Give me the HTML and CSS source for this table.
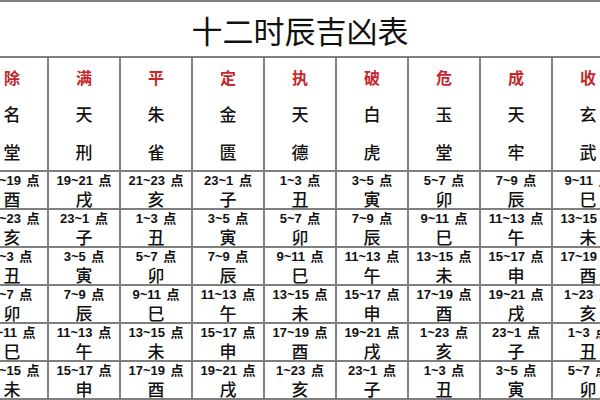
FILE: index.html
```html
<!DOCTYPE html>
<html lang="zh-CN">
<head>
<meta charset="utf-8">
<link rel="stylesheet" href="styles.css">
</head>
<body>
<div class="viewport">
  <div class="sheet">
    <div class="title">十二时辰吉凶表</div>

    <div class="head"><div class="h-red">除</div><div class="h-name">名</div><div class="h-name">堂</div></div>
    <div class="head"><div class="h-red">满</div><div class="h-name">天</div><div class="h-name">刑</div></div>
    <div class="head"><div class="h-red">平</div><div class="h-name">朱</div><div class="h-name">雀</div></div>
    <div class="head"><div class="h-red">定</div><div class="h-name">金</div><div class="h-name">匮</div></div>
    <div class="head"><div class="h-red">执</div><div class="h-name">天</div><div class="h-name">德</div></div>
    <div class="head"><div class="h-red">破</div><div class="h-name">白</div><div class="h-name">虎</div></div>
    <div class="head"><div class="h-red">危</div><div class="h-name">玉</div><div class="h-name">堂</div></div>
    <div class="head"><div class="h-red">成</div><div class="h-name">天</div><div class="h-name">牢</div></div>
    <div class="head"><div class="h-red">收</div><div class="h-name">玄</div><div class="h-name">武</div></div>

    <div class="cell"><div class="t">17~19 点</div><div class="b">酉</div></div>
    <div class="cell"><div class="t">19~21 点</div><div class="b">戌</div></div>
    <div class="cell"><div class="t">21~23 点</div><div class="b">亥</div></div>
    <div class="cell"><div class="t">23~1 点</div><div class="b">子</div></div>
    <div class="cell"><div class="t">1~3 点</div><div class="b">丑</div></div>
    <div class="cell"><div class="t">3~5 点</div><div class="b">寅</div></div>
    <div class="cell"><div class="t">5~7 点</div><div class="b">卯</div></div>
    <div class="cell"><div class="t">7~9 点</div><div class="b">辰</div></div>
    <div class="cell"><div class="t">9~11 点</div><div class="b">巳</div></div>

    <div class="cell"><div class="t">21~23 点</div><div class="b">亥</div></div>
    <div class="cell"><div class="t">23~1 点</div><div class="b">子</div></div>
    <div class="cell"><div class="t">1~3 点</div><div class="b">丑</div></div>
    <div class="cell"><div class="t">3~5 点</div><div class="b">寅</div></div>
    <div class="cell"><div class="t">5~7 点</div><div class="b">卯</div></div>
    <div class="cell"><div class="t">7~9 点</div><div class="b">辰</div></div>
    <div class="cell"><div class="t">9~11 点</div><div class="b">巳</div></div>
    <div class="cell"><div class="t">11~13 点</div><div class="b">午</div></div>
    <div class="cell"><div class="t">13~15 点</div><div class="b">未</div></div>

    <div class="cell"><div class="t">1~3 点</div><div class="b">丑</div></div>
    <div class="cell"><div class="t">3~5 点</div><div class="b">寅</div></div>
    <div class="cell"><div class="t">5~7 点</div><div class="b">卯</div></div>
    <div class="cell"><div class="t">7~9 点</div><div class="b">辰</div></div>
    <div class="cell"><div class="t">9~11 点</div><div class="b">巳</div></div>
    <div class="cell"><div class="t">11~13 点</div><div class="b">午</div></div>
    <div class="cell"><div class="t">13~15 点</div><div class="b">未</div></div>
    <div class="cell"><div class="t">15~17 点</div><div class="b">申</div></div>
    <div class="cell"><div class="t">17~19 点</div><div class="b">酉</div></div>

    <div class="cell"><div class="t">5~7 点</div><div class="b">卯</div></div>
    <div class="cell"><div class="t">7~9 点</div><div class="b">辰</div></div>
    <div class="cell"><div class="t">9~11 点</div><div class="b">巳</div></div>
    <div class="cell"><div class="t">11~13 点</div><div class="b">午</div></div>
    <div class="cell"><div class="t">13~15 点</div><div class="b">未</div></div>
    <div class="cell"><div class="t">15~17 点</div><div class="b">申</div></div>
    <div class="cell"><div class="t">17~19 点</div><div class="b">酉</div></div>
    <div class="cell"><div class="t">19~21 点</div><div class="b">戌</div></div>
    <div class="cell"><div class="t">1~23 点</div><div class="b">亥</div></div>

    <div class="cell"><div class="t">9~11 点</div><div class="b">巳</div></div>
    <div class="cell"><div class="t">11~13 点</div><div class="b">午</div></div>
    <div class="cell"><div class="t">13~15 点</div><div class="b">未</div></div>
    <div class="cell"><div class="t">15~17 点</div><div class="b">申</div></div>
    <div class="cell"><div class="t">17~19 点</div><div class="b">酉</div></div>
    <div class="cell"><div class="t">19~21 点</div><div class="b">戌</div></div>
    <div class="cell"><div class="t">1~23 点</div><div class="b">亥</div></div>
    <div class="cell"><div class="t">23~1 点</div><div class="b">子</div></div>
    <div class="cell"><div class="t">1~3 点</div><div class="b">丑</div></div>

    <div class="cell"><div class="t">13~15 点</div><div class="b">未</div></div>
    <div class="cell"><div class="t">15~17 点</div><div class="b">申</div></div>
    <div class="cell"><div class="t">17~19 点</div><div class="b">酉</div></div>
    <div class="cell"><div class="t">19~21 点</div><div class="b">戌</div></div>
    <div class="cell"><div class="t">1~23 点</div><div class="b">亥</div></div>
    <div class="cell"><div class="t">23~1 点</div><div class="b">子</div></div>
    <div class="cell"><div class="t">1~3 点</div><div class="b">丑</div></div>
    <div class="cell"><div class="t">3~5 点</div><div class="b">寅</div></div>
    <div class="cell"><div class="t">5~7 点</div><div class="b">卯</div></div>
  </div>
</div>
</body>
</html>
```

FILE: styles.css
```css
html, body {
  margin: 0;
  padding: 0;
  background: #ffffff;
}

.viewport {
  width: 600px;
  height: 400px;
  overflow: hidden;
}

.sheet {
  width: 646px;
  margin-left: -23px;
  padding: 2px 0;
  background: #7f7f7f;
  display: grid;
  grid-template-columns: repeat(9, 70px);
  grid-template-rows: 54px 112px repeat(6, 36px);
  gap: 2px;
  font-family: "Noto Sans CJK SC", "Noto Sans", sans-serif;
  color: #111111;
}

.title {
  grid-column: 1 / -1;
  background: #ffffff;
  display: flex;
  align-items: center;
  justify-content: center;
  font-size: 31px;
  font-weight: 400;
  padding-left: 23px;
  padding-right: 23px;
}

.head {
  background: #ffffff;
  display: grid;
  grid-template-rows: repeat(3, 1fr);
  text-align: center;
}

.h-red,
.h-name {
  display: flex;
  align-items: center;
  justify-content: center;
  font-size: 17px;
}

.h-red {
  color: #c4282c;
  font-weight: 700;
  font-size: 16px;
}

.h-name {
  font-weight: 500;
}

.cell {
  background: #ffffff;
  text-align: center;
}

.t {
  font-family: "Liberation Sans", "Noto Sans CJK SC", sans-serif;
  font-weight: 700;
  font-size: 13px;
  word-spacing: 2px;
  line-height: 18px;
  white-space: nowrap;
}

.b {
  font-size: 17px;
  font-weight: 500;
  line-height: 18px;
}
```
